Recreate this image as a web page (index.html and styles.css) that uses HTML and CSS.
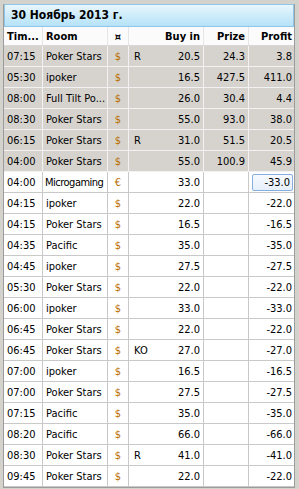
FILE: index.html
```html
<!DOCTYPE html>
<html>
<head>
<meta charset="utf-8">
<link rel="stylesheet" href="styles.css">
</head>
<body>
<div class="frame">
  <div class="title">30 Ноябрь 2013 г.</div>
  <div class="grid">
    <div class="row head">
      <div class="c t">Tim...</div><div class="c r">Room</div><div class="c cur">¤</div><div class="c x"></div><div class="c n">Buy in</div><div class="c n">Prize</div><div class="c n last">Profit</div>
    </div>
    <div class="row gray"><div class="c t">07:15</div><div class="c r">Poker Stars</div><div class="c cur">$</div><div class="c x">R</div><div class="c n">20.5</div><div class="c n">24.3</div><div class="c n last">3.8</div></div>
    <div class="row gray"><div class="c t">05:30</div><div class="c r">ipoker</div><div class="c cur">$</div><div class="c x"></div><div class="c n">16.5</div><div class="c n">427.5</div><div class="c n last">411.0</div></div>
    <div class="row gray"><div class="c t">08:00</div><div class="c r">Full Tilt Po...</div><div class="c cur">$</div><div class="c x"></div><div class="c n">26.0</div><div class="c n">30.4</div><div class="c n last">4.4</div></div>
    <div class="row gray"><div class="c t">08:30</div><div class="c r">Poker Stars</div><div class="c cur">$</div><div class="c x"></div><div class="c n">55.0</div><div class="c n">93.0</div><div class="c n last">38.0</div></div>
    <div class="row gray"><div class="c t">06:15</div><div class="c r">Poker Stars</div><div class="c cur">$</div><div class="c x">R</div><div class="c n">31.0</div><div class="c n">51.5</div><div class="c n last">20.5</div></div>
    <div class="row gray"><div class="c t">04:00</div><div class="c r">Poker Stars</div><div class="c cur">$</div><div class="c x"></div><div class="c n">55.0</div><div class="c n">100.9</div><div class="c n last">45.9</div></div>
    <div class="row"><div class="c t">04:00</div><div class="c r tight">Microgaming</div><div class="c cur">€</div><div class="c x"></div><div class="c n">33.0</div><div class="c n"></div><div class="c n last"><span class="focus">-33.0</span></div></div>
    <div class="row"><div class="c t">04:15</div><div class="c r">ipoker</div><div class="c cur">$</div><div class="c x"></div><div class="c n">22.0</div><div class="c n"></div><div class="c n last">-22.0</div></div>
    <div class="row"><div class="c t">04:15</div><div class="c r">Poker Stars</div><div class="c cur">$</div><div class="c x"></div><div class="c n">16.5</div><div class="c n"></div><div class="c n last">-16.5</div></div>
    <div class="row"><div class="c t">04:35</div><div class="c r">Pacific</div><div class="c cur">$</div><div class="c x"></div><div class="c n">35.0</div><div class="c n"></div><div class="c n last">-35.0</div></div>
    <div class="row"><div class="c t">04:45</div><div class="c r">ipoker</div><div class="c cur">$</div><div class="c x"></div><div class="c n">27.5</div><div class="c n"></div><div class="c n last">-27.5</div></div>
    <div class="row"><div class="c t">05:30</div><div class="c r">Poker Stars</div><div class="c cur">$</div><div class="c x"></div><div class="c n">22.0</div><div class="c n"></div><div class="c n last">-22.0</div></div>
    <div class="row"><div class="c t">06:00</div><div class="c r">ipoker</div><div class="c cur">$</div><div class="c x"></div><div class="c n">33.0</div><div class="c n"></div><div class="c n last">-33.0</div></div>
    <div class="row"><div class="c t">06:45</div><div class="c r">Poker Stars</div><div class="c cur">$</div><div class="c x"></div><div class="c n">22.0</div><div class="c n"></div><div class="c n last">-22.0</div></div>
    <div class="row"><div class="c t">06:45</div><div class="c r">Poker Stars</div><div class="c cur">$</div><div class="c x">KO</div><div class="c n">27.0</div><div class="c n"></div><div class="c n last">-27.0</div></div>
    <div class="row"><div class="c t">07:00</div><div class="c r">ipoker</div><div class="c cur">$</div><div class="c x"></div><div class="c n">16.5</div><div class="c n"></div><div class="c n last">-16.5</div></div>
    <div class="row"><div class="c t">07:00</div><div class="c r">Poker Stars</div><div class="c cur">$</div><div class="c x"></div><div class="c n">27.5</div><div class="c n"></div><div class="c n last">-27.5</div></div>
    <div class="row"><div class="c t">07:15</div><div class="c r">Pacific</div><div class="c cur">$</div><div class="c x"></div><div class="c n">35.0</div><div class="c n"></div><div class="c n last">-35.0</div></div>
    <div class="row"><div class="c t">08:20</div><div class="c r">Pacific</div><div class="c cur">$</div><div class="c x"></div><div class="c n">66.0</div><div class="c n"></div><div class="c n last">-66.0</div></div>
    <div class="row"><div class="c t">08:30</div><div class="c r">Poker Stars</div><div class="c cur">$</div><div class="c x">R</div><div class="c n">41.0</div><div class="c n"></div><div class="c n last">-41.0</div></div>
    <div class="row"><div class="c t">09:45</div><div class="c r">Poker Stars</div><div class="c cur">$</div><div class="c x"></div><div class="c n">22.0</div><div class="c n"></div><div class="c n last">-22.0</div></div>
  </div>
</div>
</body>
</html>
```
FILE: styles.css
```css
html, body {
  margin: 0;
  padding: 0;
}
body {
  background: #d4d2cc;
  font-family: "DejaVu Sans Condensed", "Liberation Sans", sans-serif;
  font-size: 11px;
  color: #000;
  width: 299px;
  height: 489px;
  overflow: hidden;
  padding: 4px 4px 0 3px;
  box-sizing: border-box;
}
.frame {
  border-left: 1px solid #9c9c9c;
  border-right: 1px solid #9c9c9c;
  border-bottom: 1px solid #9c9c9c;
  background: #fff;
}
.title {
  height: 21px;
  line-height: 21px;
  border: 1px solid #8fc5e8;
  background: linear-gradient(#e9f6fd, #cdecfa 50%, #b5e2f8);
  font-weight: bold;
  font-size: 12px;
  padding-left: 6px;
}
.grid {
  display: flex;
  flex-direction: column;
}
.row {
  display: grid;
  grid-template-columns: 39px 65px 21px 36px 39px 45px 45px;
  height: 21px;
  border-bottom: 1px solid #c9c9c9;
  box-sizing: border-box;
}
.row.head {
  height: 19px;
  background: #fbfbfb;
  font-weight: bold;
  border-bottom: 1px solid #d8d8d8;
}
.row.gray {
  background: #d6d3ce;
  border-bottom-color: #f2f2f2;
}
.c {
  border-right: 1px solid #c9c9c9;
  padding: 0 3px;
  display: flex;
  align-items: center;
  white-space: nowrap;
  overflow: hidden;
}
.c.tight { letter-spacing: -0.5px; padding-left: 2px; }
.gray .c { border-right-color: #f2f2f2; }
.head .c { border-right-color: #e6e6e6; }
.c.x { border-right: none; padding-left: 5px; }
.c.n { justify-content: flex-end; overflow: visible; }
.c.last { border-right: none; padding-right: 2px; }
.c.cur {
  justify-content: center;
  color: #b86e00;
}
.head .c.cur { color: #000; }
.focus {
  display: flex;
  align-items: center;
  justify-content: flex-end;
  width: 42px;
  height: 17px;
  padding-right: 2px;
  border: 1px solid #86aee0;
  border-radius: 2px;
  background: linear-gradient(#f7fafe, #e6effb);
  margin-right: -1px;
  box-sizing: border-box;
}
```
